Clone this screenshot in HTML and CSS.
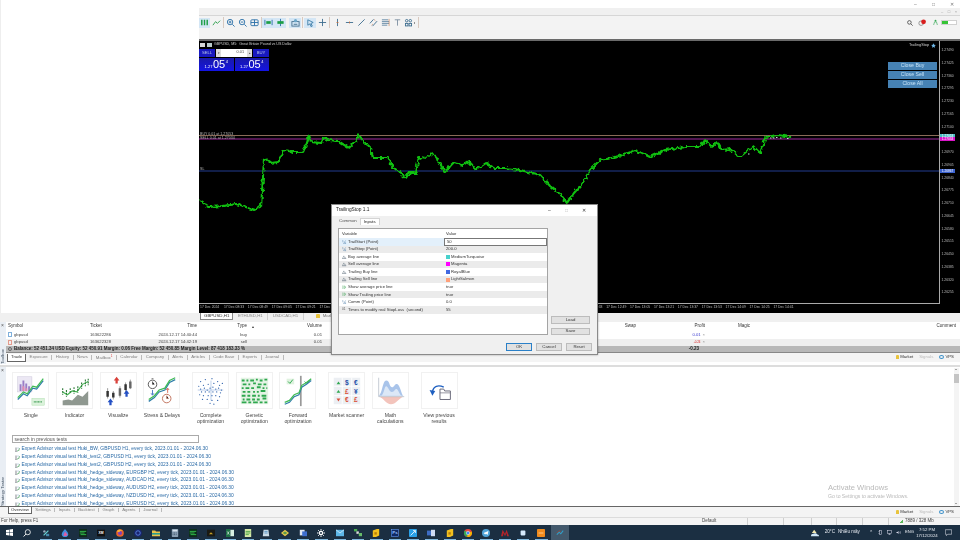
FILE: index.html
```html
<!DOCTYPE html>
<html lang="en">
<head>
<meta charset="utf-8">
<title>MetaTrader 5</title>
<link rel="stylesheet" href="styles.css">
</head>
<body>
<svg class="defs" width="0" height="0">
  <symbol id="tic" viewBox="0 0 10 10"><path d="M2 1v8M1 8l1 1 1-1" fill="none" stroke="#333a44" stroke-width="1.200"/><path d="M5 9l1-3 2 1 1-5" fill="none" stroke="#3f9a55" stroke-width="1.200"/><path d="M5 2l2 0" stroke="#2a6aa6"/></symbol>
  <symbol id="ihalf" viewBox="0 0 10 10"><path d="M2 1v4M1 1.500l1-.5M3 9l5-8" fill="none" stroke="#4a7ca8"/><path d="M6 6h2.500v1.500H6V9h3" fill="none" stroke="#4a7ca8" stroke-width=".8"/></symbol>
  <symbol id="iline" viewBox="0 0 10 10"><path d="M1 8l3-6 2 4 1-1 2 3z" fill="none" stroke="#5f6f7e"/><path d="M0 9h10" stroke="#5f6f7e"/></symbol>
  <symbol id="ibool" viewBox="0 0 10 10"><path d="M2 1v8M5 2l4 3-4 3z" fill="none" stroke="#3aa050"/></symbol>
</svg>
<div class="app">
  <div class="upper">
    <div class="blank"></div>
    <div class="work">
      <div class="titlebar">
        <span class="wc">&#8211;</span><span class="wc">&#9633;</span><span class="wc">&#10005;</span>
      </div>
      <div class="menubar"><span class="mc">&#8211;</span><span class="mc">&#9633;</span><span class="mc">&#215;</span></div>
      <div class="toolbar">
        <span class="tb first hl"><svg viewBox="0 0 10 10"><path d="M2 2v6M5 2v6M8 2v6" stroke="#1b9e45" stroke-width="1.600"/></svg></span>
        <span class="tb"><svg viewBox="0 0 10 10"><path d="M1 8l3-4 2 2 3-3" fill="none" stroke="#2c9e4b"/></svg></span>
        <span class="sep"></span>
        <span class="tb"><svg viewBox="0 0 10 10"><circle cx="4.500" cy="4.500" r="3" fill="none" stroke="#2a6fa8"/><path d="M7 7l2.500 2.500M3 4.500h3M4.500 3v3" stroke="#2a6fa8"/></svg></span>
        <span class="tb"><svg viewBox="0 0 10 10"><circle cx="4.500" cy="4.500" r="3" fill="none" stroke="#2a6fa8"/><path d="M7 7l2.500 2.500M3 4.500h3" stroke="#2a6fa8"/></svg></span>
        <span class="tb"><svg viewBox="0 0 10 10"><rect x="1" y="2" width="8" height="6.500" rx="1" fill="none" stroke="#2a6fa8"/><path d="M1 5h8M5 2v6.500" stroke="#2a6fa8"/></svg></span>
        <span class="sep"></span>
        <span class="tb hl"><svg viewBox="0 0 10 10"><path d="M1 2v6M9 2v6" stroke="#2a6fa8"/><path d="M2.500 5h5" stroke="#1b9e45" stroke-width="3"/></svg></span>
        <span class="tb hl"><svg viewBox="0 0 10 10"><path d="M5 1v8" stroke="#2a6fa8"/><path d="M1.500 5h7" stroke="#1b9e45" stroke-width="3"/></svg></span>
        <span class="gap"></span>
        <span class="tb hl"><svg viewBox="0 0 10 10"><rect x="1" y="4" width="8" height="5" fill="none" stroke="#45708f"/><circle cx="5" cy="3" r="1.800" fill="#6fa8c9"/><path d="M3 7h4" stroke="#45708f"/></svg></span>
        <span class="sep wide"></span>
        <span class="tb hl"><svg viewBox="0 0 10 10"><path d="M2 2l6 3-2.500 1L7 9 5.500 9.500 4.500 6.500 2 8z" fill="none" stroke="#3d7ea8"/></svg></span>
        <span class="tb"><svg viewBox="0 0 10 10"><path d="M5 1v8M1 5h8" stroke="#3d6d8f"/></svg></span>
        <span class="sep wide"></span>
        <span class="tb"><svg viewBox="0 0 10 10"><path d="M5 1v8" stroke="#3d6d8f"/><path d="M4 5h2" stroke="#c06a3a"/></svg></span>
        <span class="tb"><svg viewBox="0 0 10 10"><path d="M1 5h8" stroke="#3d6d8f"/><path d="M5 4v2" stroke="#c06a3a"/></svg></span>
        <span class="tb"><svg viewBox="0 0 10 10"><path d="M1.500 8.500l7-7" stroke="#3d6d8f"/></svg></span>
        <span class="tb"><svg viewBox="0 0 10 10"><path d="M1 6l4-4.500M4 9l5-5.500" stroke="#3d6d8f"/><path d="M3 8l1-1M6 2l1 1" stroke="#c06a3a"/></svg></span>
        <span class="tb"><svg viewBox="0 0 10 10"><path d="M1 2h7M1 4h8M1 6h8M1 8h6" stroke="#3d6d8f" stroke-width=".8"/><path d="M9 1v8" stroke="#c06a3a" stroke-width=".6"/></svg></span>
        <span class="tb"><svg viewBox="0 0 10 10"><path d="M2 2h6M5 2v6.500" stroke="#7c8fa0"/></svg></span>
        <span class="tb short"><svg viewBox="0 0 10 10"><circle cx="3" cy="3" r="1.400" fill="none" stroke="#3d6d8f"/><circle cx="7" cy="3" r="1.400" fill="none" stroke="#3d6d8f"/><rect x="1.600" y="6" width="2.800" height="2.800" fill="none" stroke="#3d6d8f"/><rect x="5.600" y="6" width="2.800" height="2.800" fill="none" stroke="#3d6d8f"/></svg></span>
        <span class="tbarrow"></span>
        <span class="sep"></span>
        <span class="spacer"></span>
        <span class="rt search"><svg viewBox="0 0 10 10"><circle cx="4" cy="4" r="3" fill="none" stroke="#333" stroke-width="1.200"/><path d="M6.300 6.300L9.500 9.500" stroke="#333" stroke-width="1.200"/></svg></span>
        <span class="rt bell"><svg viewBox="0 0 12 10"><circle cx="4" cy="6" r="3.200" fill="none" stroke="#777"/><circle cx="7.500" cy="4" r="3.400" fill="#d81e1e"/></svg></span>
        <span class="rt person"><svg viewBox="0 0 8 10"><circle cx="4" cy="2" r="1.500" fill="#34a853"/><path d="M1 9l1.500-5h3L7 9" fill="none" stroke="#34a853"/></svg></span>
        <span class="conn"><span class="conn-fill"></span></span>
      </div>
      <div class="chart">
        <div class="chart-main">
          <div class="plot">
            <svg class="plot-svg" viewBox="199 41 740 263" preserveAspectRatio="none">
              <defs>
                <filter id="jitter" filterUnits="userSpaceOnUse" x="199" y="41" width="740" height="263" color-interpolation-filters="sRGB">
                  <feTurbulence type="fractalNoise" baseFrequency="0.3" numOctaves="1" seed="4"/>
                  <feDisplacementMap in="SourceGraphic" scale="6" xChannelSelector="R" yChannelSelector="G"/>
                </filter>
              </defs>
              <line class="ln-buy" x1="199" y1="135.500" x2="939" y2="135.500"/>
              <line class="ln-sell" x1="199" y1="139" x2="939" y2="139"/>
              <line class="ln-sl" x1="199" y1="171" x2="939" y2="171"/>
              <polyline class="price" filter="url(#jitter)" points="199,200 209,207 223,206 236,204 246,207 254,210 261,207 263,177 264,158 271,163 278,162 284,150 293,152 303,152 307,143 309,135 311,142 321,143 324,137 329,140 338,141 349,148 356,140 359,135 364,142 371,148 373,158 388,158 393,167 406,178 409,173 416,173 419,157 426,158 433,153 439,162 445,172 453,163 463,165 469,161 476,170 486,163 494,168 505,168 520,170 540,175 550,186 560,194 567,203 574,193 582,184 590,170 600,160 612,158 622,155 635,150 650,157 665,150 685,147 700,147 705,140 712,147 717,142 722,150 730,149 740,157 753,146 760,153 766,137 778,135 790,137"/>
              <path class="ticks" d="M748 154h1.500M770 138h1.500M773 138h1.500M776 137.500h1.500M780 138h1.500M787 138.500h1.500"/>
              <text class="mini" x="200" y="134.500">BUY 0.01 at 1.27053</text>
              <text class="mini" x="200" y="138.500">SELL 0.01 at 1.27034</text>
              <text class="mini" x="200" y="170">SL</text>
            </svg>
            <div class="chart-title">
              <span class="ct-icon"></span><span class="ct-icon dark"></span>
              <span>GBPUSD, M5:  Great Britain Pound vs US Dollar</span>
            </div>
            <div class="trade-panel">
              <div class="tp-top">
                <span class="tp-btn">SELL</span>
                <span class="tp-spin"><b>&#9662;</b><i>0.01</i><b>&#9652;</b></span>
                <span class="tp-btn">BUY</span>
              </div>
              <div class="tp-quotes">
                <div class="quote"><small>1.27</small><strong>05</strong><sup>4</sup></div>
                <div class="quote"><small>1.27</small><strong>05</strong><sup>4</sup></div>
              </div>
            </div>
            <div class="ea-name">TrailingStop <svg viewBox="0 0 10 10"><path d="M5 .5l1.400 3 3.300.4-2.400 2.200.6 3.300L5 7.800 2.100 9.400l.6-3.300L.3 3.900l3.300-.4z" fill="#6fb6e6"/></svg></div>
            <div class="close-btns">
              <span class="close-btn">Close Buy</span>
              <span class="close-btn">Close Sell</span>
              <span class="close-btn">Close All</span>
            </div>
          </div>
          <div class="axis">
            <span>1.27490</span><span>1.27425</span><span>1.27360</span><span>1.27295</span><span>1.27230</span><span>1.27165</span><span>1.27100</span><span></span><span>1.26970</span><span>1.26905</span><span>1.26840</span><span>1.26775</span><span>1.26710</span><span>1.26645</span><span>1.26580</span><span>1.26515</span><span>1.26450</span><span>1.26385</span><span>1.26320</span><span>1.26255</span>
            <em class="tag tag-buy">1.27053</em>
            <em class="tag tag-sell">1.27034</em>
            <em class="tag tag-sl">1.26867</em>
          </div>
        </div>
        <div class="times">
          <span>17 Dec 2024</span><span>17 Dec 08:33</span><span>17 Dec 08:49</span><span>17 Dec 09:05</span><span>17 Dec 09:21</span><span>17 Dec 09:37</span><span></span><span></span><span></span><span></span><span></span><span></span><span></span><span></span><span></span><span></span><span>17 Dec 12:33</span><span>17 Dec 12:49</span><span>17 Dec 13:05</span><span>17 Dec 13:21</span><span>17 Dec 13:37</span><span>17 Dec 13:53</span><span>17 Dec 14:09</span><span>17 Dec 14:25</span><span>17 Dec 14:41</span>
        </div>
      </div>
    </div>
  </div>

  <div class="charttabs">
    <span class="ctab active">GBPUSD,H1</span><span class="ctab">ETHUSD,H1</span><span class="ctab">USDCAD,H1</span>
    <span class="ctab market"><i class="lock"></i>Market</span>
  </div>

  <div class="toolbox">
    <div class="side"><span class="side-x">&#215;</span><span class="side-label">Toolbox</span></div>
    <div class="box-main">
      <div class="row head">
        <span>Symbol</span><span>Ticket</span><span class="r">Time</span><span class="r">Type</span><span class="arrow">&#9652;</span><span class="r">Volume</span><span class="r">Swap</span><span class="r">Profit</span><span class="r">Magic</span><span class="r">Comment</span>
      </div>
      <div class="row">
        <span class="sym"><i class="pos buy"></i>gbpusd</span><span>163622286</span><span class="r">2024.12.17 14:40:44</span><span class="r">buy</span><span></span><span class="r">0.01</span><span></span><span class="r"><b class="pl blue">0.01</b><b class="x">&#215;</b></span><span></span><span></span>
      </div>
      <div class="row alt">
        <span class="sym"><i class="pos sell"></i>gbpusd</span><span>163622328</span><span class="r">2024.12.17 14:42:19</span><span class="r">sell</span><span></span><span class="r">0.01</span><span></span><span class="r"><b class="pl red">-0.24</b><b class="x">&#215;</b></span><span></span><span></span>
      </div>
      <div class="row balance">
        <span class="bal"><i class="bal-ic"></i>Balance: 52 451.34 USD  Equity: 52 450.91  Margin: 0.06  Free Margin: 52 450.85  Margin Level: 87 418 183.33 %</span><span class="r total">-0.23</span>
      </div>
      <div class="tabs tabs-toolbox">
        <span class="tab active">Trade</span><span class="tab">Exposure</span><span class="tab">History</span><span class="tab">News</span><span class="tab">Mailbox<sup class="red">1</sup></span><span class="tab">Calendar</span><span class="tab">Company</span><span class="tab">Alerts</span><span class="tab">Articles</span><span class="tab">Code Base</span><span class="tab">Experts</span><span class="tab">Journal</span>
        <span class="spacer"></span>
        <span class="svc"><i class="lock"></i>Market</span><span class="svc faint">Signals</span><span class="svc"><i class="vps"></i>VPS</span>
      </div>
    </div>
  </div>

  <div class="tester">
    <div class="side"><span class="side-x">&#215;</span><span class="side-label">Strategy Tester</span></div>
    <div class="tester-main">
      <div class="cards">
        <div class="card">
          <div class="thumb"><svg viewBox="0 0 37 37"><rect x="5" y="4" width="15" height="16" fill="#ece8f4" stroke="#c8c4d8" stroke-width=".5"/><path d="M8 19v-7M11 19v-11M14 19v-8M17 19v-5" stroke="#9a7ec6" stroke-width="2"/><path d="M11 19v-5M14 19v-3" stroke="#e08ab0" stroke-width="2"/><path d="M5 28l6-6 4 2 6-8 4 1 7-9" fill="none" stroke="#2f7ea8" stroke-width="1.300"/><path d="M5 26l6-6 4 2 6-8 4 1 7-9" fill="none" stroke="#3fbb55" stroke-width="1.300"/><rect x="20" y="27" width="13" height="7" fill="#dcf2dc" stroke="#a9dca9" stroke-width=".5"/><path d="M22 30.500h9" stroke="#3a9a50" stroke-dasharray="1 .5" stroke-width="1.500"/></svg></div>
          <p class="one">Single</p>
        </div>
        <div class="card">
          <div class="thumb"><svg viewBox="0 0 37 37"><path d="M6 34v-5l6-1 4 1 6-6 5 2 6-6v15z" fill="#8f9890"/><path d="M6 20l5 3 5-4 5 1 6-8 6-3" fill="none" stroke="#45b653" stroke-width="1.200"/><path d="M6 16v7M10 18v7M14 16v6M18 15v7M22 14v7M26 10v7M30 7v7M33 6v7" stroke="#2f7b3a" stroke-width="1.200" stroke-dasharray="2 1"/></svg></div>
          <p class="one">Indicator</p>
        </div>
        <div class="card">
          <div class="thumb"><svg viewBox="0 0 37 37"><path d="M7 16v11M13 19v9M20 14v12M26 10v10M31 7v10" stroke="#555" stroke-width=".6"/><path d="M7 19v6M13 21v5M26 12v6" stroke="#333" stroke-width="2.600"/><path d="M20 16v8M31 9v7" stroke="#666" stroke-width="2.600"/><path d="M16.500 4l3 4h-1.800v3h-2.400V8h-1.800z" fill="#d9403a"/><path d="M10 27l3 4h-1.800v3H8.800v-3H7z" fill="#2450c4"/><path d="M27 18l3 4h-1.800v3h-2.400v-3H24z" fill="#2450c4"/></svg></div>
          <p class="one">Visualize</p>
        </div>
        <div class="card">
          <div class="thumb"><svg viewBox="0 0 37 37"><circle cx="9" cy="12" r="4.500" fill="#fff" stroke="#555"/><path d="M9 9v3h2M8 6h2" stroke="#555" stroke-width=".8"/><circle cx="24" cy="27" r="4.500" fill="#fff" stroke="#c0705a"/><path d="M24 24v3h2" stroke="#c0705a" stroke-width=".8"/><path d="M5 30l6-4 5-6 6-2 5-8 6-3" fill="none" stroke="#2f7ea8" stroke-width="1.300"/><path d="M5 28l6-4 5-6 6-2 5-8 6-3" fill="none" stroke="#3fbb55" stroke-width="1.300"/><path d="M9 18v5M7.500 21.500l1.500 2 1.500-2" fill="none" stroke="#4a78c8"/><path d="M25 21v-5M23.500 18l1.500-2 1.500 2" fill="none" stroke="#d86b5a"/></svg></div>
          <p class="one">Stress &amp; Delays</p>
        </div>
        <div class="card wide">
          <div class="thumb"><svg viewBox="0 0 37 37"><path d="M5 18h27M19 8v21" stroke="#9db8e0" stroke-width=".7"/><path d="M8 9h.1M13 7h.1M20 6h.1M26 9h.1M31 11h.1M6 14h.1M11 13h.1M16 12h.1M22 11h.1M28 13h.1M8 17h.1M12 16h.1M15 18h.1M18 16h.1M21 15h.1M24 17h.1M27 16h.1M30 18h.1M9 20h.1M13 20h.1M17 20h.1M21 20h.1M25 20h.1M29 21h.1M7 23h.1M11 24h.1M16 24h.1M20 24h.1M24 24h.1M28 25h.1M10 28h.1M15 28h.1M20 29h.1M26 29h.1M18 32h.1M22 33h.1" stroke="#3a6ab0" stroke-width="1.300" stroke-linecap="round"/></svg></div>
          <p>Complete optimization</p>
        </div>
        <div class="card">
          <div class="thumb"><svg viewBox="0 0 37 37"><rect x="4" y="5" width="29" height="28" fill="#e5f3e5"/><path d="M5 8h3M10 8h2M14 8h4M20 7h2M24 8h3M29 7h3M6 12h4M12 12h2M17 11h3M22 12h4M28 12h3M5 16h2M9 16h4M15 16h3M21 15h4M27 16h2M31 16h1M6 20h3M11 20h3M17 20h2M21 20h2M25 19h5M5 24h4M11 24h3M16 24h4M22 24h2M26 24h5M6 28h2M10 28h4M16 28h3M21 28h3M27 27h4M5 31h5M12 31h3M17 31h5M24 31h3M29 31h3" stroke="#2fa84f" stroke-width="2"/></svg></div>
          <p>Genetic optimization</p>
        </div>
        <div class="card">
          <div class="thumb"><svg viewBox="0 0 37 37"><path d="M22 3v32" stroke="#999" stroke-width="1.800"/><rect x="7" y="6" width="8" height="6" fill="#dff2df"/><path d="M8.500 9l2 2 3-4M26 9l2 2 4-4" fill="none" stroke="#2fa84f"/><path d="M5 33l5-2 5-6 5-2 3-8 5-3 5-4" fill="none" stroke="#2f7ea8" stroke-width="1.300"/><path d="M5 31l5-2 5-6 5-2 3-8 5-3 5-4" fill="none" stroke="#3fbb55" stroke-width="1.300"/></svg></div>
          <p>Forward optimization</p>
        </div>
        <div class="card wide">
          <div class="thumb"><svg viewBox="0 0 37 37"><rect x="5" y="5" width="28" height="28" fill="#eceff3"/><path d="M14 5v28M24 5v28M5 14h28M5 24h28" stroke="#fff"/><path d="M8 12l2-3 2 3z" fill="#2fa84f"/><path d="M8 21l2-3 2 3z" fill="#2fa84f"/><path d="M8 27l2 3 2-3z" fill="#d9503a"/><text class="sym-b" x="19" y="12.500">$</text><text class="sym-b" x="28.500" y="12.500">&#8364;</text><text class="sym-r" x="19" y="22">&#163;</text><text class="sym-b" x="28.500" y="22">&#165;</text><text class="sym-r" x="19" y="31">&#8364;</text><text class="sym-r" x="28.500" y="31">&#163;</text></svg></div>
          <p class="one">Market scanner</p>
        </div>
        <div class="card">
          <div class="thumb"><svg viewBox="0 0 37 37"><path d="M6 24C10 22 10 8 14 8s3 7 6 7 3-5 6-3 4 11 6 12z" fill="#a9c4ea"/><path d="M9 24c3-3 3-10 5-10s3 6 6 6 3-4 5-3 3 6 5 7z" fill="#dce8f7"/><path d="M6 25c5 1 8 8 13 8s8-6 13-8z" fill="#f3c4bc"/><path d="M6 5v20h27" fill="none" stroke="#9aa6b5" stroke-width=".6"/></svg></div>
          <p>Math calculations</p>
        </div>
        <div class="card wide">
          <div class="thumb"><svg viewBox="0 0 37 37"><path d="M11 20c1-6 6-8 12-5" fill="none" stroke="#1e5fc0" stroke-width="1.500"/><path d="M8 18l3 6 3-5z" fill="#1e5fc0"/><path d="M19 17h4l1 2h6v9H19z" fill="#fff" stroke="#667" stroke-width="1"/><path d="M19 21h11" stroke="#667" stroke-width=".7"/></svg></div>
          <p>View previous results</p>
        </div>
      </div>
      <div class="search-box">search in previous tests</div>
      <ul class="tests">
        <li><svg class="t-ic"><use href="#tic"/></svg>Expert Advisor visual test Huki_BW, GBPUSD H1, every tick, 2023.01.01 - 2024.06.30</li>
        <li><svg class="t-ic"><use href="#tic"/></svg>Expert Advisor visual test Huki_test2, GBPUSD H1, every tick, 2023.01.01 - 2024.06.30</li>
        <li><svg class="t-ic"><use href="#tic"/></svg>Expert Advisor visual test Huki_test2, GBPUSD H2, every tick, 2023.01.01 - 2024.06.30</li>
        <li><svg class="t-ic"><use href="#tic"/></svg>Expert Advisor visual test Huki_hedge_sideway, EURGBP H2, every tick, 2023.01.01 - 2024.06.30</li>
        <li><svg class="t-ic"><use href="#tic"/></svg>Expert Advisor visual test Huki_hedge_sideway, AUDCAD H2, every tick, 2023.01.01 - 2024.06.30</li>
        <li><svg class="t-ic"><use href="#tic"/></svg>Expert Advisor visual test Huki_hedge_sideway, AUDUSD H2, every tick, 2023.01.01 - 2024.06.30</li>
        <li><svg class="t-ic"><use href="#tic"/></svg>Expert Advisor visual test Huki_hedge_sideway, NZDUSD H2, every tick, 2023.01.01 - 2024.06.30</li>
        <li><svg class="t-ic"><use href="#tic"/></svg>Expert Advisor visual test Huki_hedge_sideway, EURUSD H2, every tick, 2023.01.01 - 2024.06.30</li>
      </ul>
      <div class="scrollbar"><span class="sb-up"></span><span class="sb-thumb"></span><span class="sb-down"></span></div>
      <div class="watermark"><strong>Activate Windows</strong><span>Go to Settings to activate Windows.</span></div>
    </div>
  </div>

  <div class="tabs tabs-tester">
    <span class="tab active">Overview</span><span class="tab">Settings</span><span class="tab">Inputs</span><span class="tab">Backtest</span><span class="tab">Graph</span><span class="tab">Agents</span><span class="tab">Journal</span>
    <span class="spacer"></span>
    <span class="svc"><i class="lock"></i>Market</span><span class="svc faint">Signals</span><span class="svc"><i class="vps"></i>VPS</span>
  </div>

  <div class="status">
    <span class="st-help">For Help, press F1</span>
    <span class="st-cell st-default">Default</span>
    <span class="st-cell c36"></span><span class="st-cell c28"></span><span class="st-cell c25"></span><span class="st-cell c26"></span><span class="st-cell c26"></span>
    <span class="st-cell st-mem"><i class="bars"></i>7889 / 328 Mb</span>
  </div>

  <div class="taskbar">
    <span class="start"><svg viewBox="0 0 10 10"><path d="M0 1.500l4.300-.6v3.800H0zM5 .8L10 0v4.700H5zM0 5.400h4.300v3.800L0 8.600zM5 5.400h5V10l-5-.7z" fill="#fff"/></svg></span>
    <span class="t-search"><svg viewBox="0 0 10 10"><circle cx="6" cy="4" r="3.200" fill="none" stroke="#fff"/><path d="M3.600 6.400L.8 9.400" stroke="#fff" stroke-width="1.200"/></svg></span>
    <div class="apps">
      <span class="app-i on"><svg viewBox="0 0 10 10"><path d="M2 8l3-3 3-3" stroke="#6cc" stroke-width="1.500"/><circle cx="3" cy="3" r="1.500" fill="#9ab"/><rect x="5" y="6" width="4" height="3" fill="#48a"/></svg></span>
      <span class="app-i on"><svg viewBox="0 0 10 10"><path d="M5 0c3 3 4 5 4 6.500a4 3.500 0 0 1-8 0C1 5 2 3 5 0z" fill="#3f8fe0"/><path d="M5 3c1 2 3 3 3 4a3 2.500 0 0 1-5 1z" fill="#e05aa0"/></svg></span>
      <span class="app-i on"><svg viewBox="0 0 10 10"><rect width="10" height="10" fill="#0e2a1a"/><path d="M1 3h8M1 5h6M2 7h7" stroke="#39d353"/></svg></span>
      <span class="app-i on"><svg viewBox="0 0 12 10"><rect width="12" height="10" fill="#111"/><text class="xm" x="6" y="6.800">XM</text></svg></span>
      <span class="app-i on"><svg viewBox="0 0 10 10"><circle cx="5" cy="5" r="4.800" fill="#e8622a"/><circle cx="5" cy="5" r="2.500" fill="#7a3fc0"/><path d="M1 3c2-3 5-3 7-1-2 0-3 1-4 2" fill="#f9b233"/></svg></span>
      <span class="app-i on"><svg viewBox="0 0 10 10"><circle cx="5" cy="5" r="4.800" fill="#1a2470"/><circle cx="5" cy="5" r="2.800" fill="none" stroke="#5c8fe8"/></svg></span>
      <span class="app-i on"><svg viewBox="0 0 10 10"><path d="M0 2h4l1 1h5v6H0z" fill="#eac34a"/><rect y="5" width="10" height="2" fill="#2a9d8f"/></svg></span>
      <span class="app-i on"><svg viewBox="0 0 8 10"><rect width="8" height="10" rx=".8" fill="#8aa0b4"/><rect x="1" y="1" width="6" height="2" fill="#d9e4ee"/><path d="M1 5h6M1 7h6" stroke="#34495e" stroke-dasharray="1 1"/></svg></span>
      <span class="app-i on"><svg viewBox="0 0 10 10"><rect width="10" height="10" fill="#0c2f1a"/><path d="M1 3h8M1 5h6M2 7h7" stroke="#39d353"/></svg></span>
      <span class="app-i on"><svg viewBox="0 0 12 10"><rect width="12" height="10" fill="#1a1a14"/><path d="M3 7l3-3 3 3z" fill="#c9a227"/></svg></span>
      <span class="app-i on"><svg viewBox="0 0 10 10"><rect width="5.500" height="10" fill="#1e7145"/><rect x="5.500" y="1" width="4.500" height="8" fill="#d9efe2"/><path d="M1.500 3l2.500 4M4 3L1.500 7" stroke="#fff" stroke-width=".7"/></svg></span>
      <span class="app-i on"><svg viewBox="0 0 8 10"><rect width="8" height="10" fill="#d5e8a8"/><path d="M1 3h6M1 5h6M1 7h4" stroke="#3a9a3a"/></svg></span>
      <span class="app-i on"><svg viewBox="0 0 10 10"><path d="M2 1h6l1 8H1z" fill="#c9dce8"/><path d="M3 3h4M3 5h4" stroke="#4a8cc0"/></svg></span>
      <span class="app-i on"><svg viewBox="0 0 10 10"><path d="M5 1l5 4-5 4-5-4z" fill="#e8c94a"/><path d="M5 3l3 2-3 2-3-2z" fill="#5a9a4a"/></svg></span>
      <span class="app-i on"><svg viewBox="0 0 10 10"><rect x="1" y="1" width="6" height="7" fill="#dfe7f2"/><rect x="4" y="3" width="6" height="6" fill="#3e6fd0"/></svg></span>
      <span class="app-i on"><svg viewBox="0 0 10 10"><circle cx="5" cy="5" r="2" fill="none" stroke="#fff" stroke-width="1.500"/><path d="M5 0v2M5 8v2M0 5h2M8 5h2M1.500 1.500l1.500 1.500M7 7l1.500 1.500M1.500 8.500L3 7M7 3l1.500-1.500" stroke="#fff" stroke-width="1.200"/></svg></span>
      <span class="app-i on"><svg viewBox="0 0 10 8"><rect width="10" height="8" fill="#5db7e8"/><path d="M0 0l5 4 5-4" fill="none" stroke="#d7eefb"/></svg></span>
      <span class="app-i on"><svg viewBox="0 0 10 10"><rect x="0" y="0" width="4" height="3" fill="#4caf50"/><rect x="3" y="3" width="3" height="3" fill="#ddd"/><rect x="6" y="5" width="4" height="4" fill="#66bb6a"/></svg></span>
      <span class="app-i on"><svg viewBox="0 0 8 10"><path d="M0 2l5-2h3v8l-4 2H0z" fill="#f2c01e"/><path d="M2 4h3v3H2z" fill="#b77f0a"/></svg></span>
      <span class="app-i on"><svg viewBox="0 0 10 10"><rect width="10" height="10" fill="#0f2a66"/><rect x=".5" y=".5" width="9" height="9" fill="none" stroke="#7ab0ff" stroke-width=".6"/><text class="ps" x="5" y="6.800">Ps</text></svg></span>
      <span class="app-i on"><svg viewBox="0 0 10 10"><rect width="10" height="10" rx="1" fill="#2aa0e6"/><path d="M2 8l6-6M5 2h3v3" stroke="#fff" fill="none"/></svg></span>
      <span class="app-i on"><svg viewBox="0 0 10 10"><rect x="0" y="2" width="5" height="6" fill="#3d6cc4"/><rect x="5" y="1" width="5" height="8" fill="#cfdcf4"/></svg></span>
      <span class="app-i on"><svg viewBox="0 0 8 10"><path d="M0 2l5-2h3v8l-4 2H0z" fill="#f2c01e"/><path d="M2 4h3v3H2z" fill="#b77f0a"/></svg></span>
      <span class="app-i on"><svg viewBox="0 0 10 10"><circle cx="5" cy="5" r="5" fill="#e8453c"/><path d="M5 5L1 2a5 5 0 0 0 3 8z" fill="#34a853"/><path d="M5 5l-1 5a5 5 0 0 0 5.500-7z" fill="#f4b400"/><circle cx="5" cy="5" r="2.200" fill="#4285f4" stroke="#fff" stroke-width=".6"/></svg></span>
      <span class="app-i on"><svg viewBox="0 0 10 10"><circle cx="5" cy="5" r="5" fill="#4fa3d8"/><path d="M2 5l6-2.500-1 5-2-1.500-1 1z" fill="#fff"/></svg></span>
      <span class="app-i on"><svg viewBox="0 0 10 10"><path d="M0 9l2-8 3 5 2-5 3 8H7.500L7 5 5 9 3 5 2.500 9z" fill="#b3232a"/></svg></span>
      <span class="app-i on"><svg viewBox="0 0 10 10"><rect x="2" y="2" width="6" height="6" rx="1" fill="#d6e9fb"/></svg></span>
      <span class="app-i on"><svg viewBox="0 0 10 10"><rect width="10" height="10" rx="1" fill="#f08a1c"/><path d="M2 5h6" stroke="#ffd9a8"/></svg></span>
      <span class="app-i current"><svg viewBox="0 0 10 10"><path d="M1 7l3-3 2 2 3-4" fill="none" stroke="#2f9ec9" stroke-width="1.300"/><path d="M1 5l3-3 2 2" fill="none" stroke="#9a4a3a"/></svg></span>
    </div>
    <span class="spacer"></span>
    <div class="tray">
      <span class="weather"><svg viewBox="0 0 12 10"><path d="M5 1l3 4H2z" fill="#f4e9b0"/><path d="M1 9c0-2 1-3 3-3 1-1 4-1 5 1 2 0 2 2 2 2z" fill="#cfe6f7"/></svg></span>
      <span class="tr-text">20&#176;C</span><span class="tr-text">Nhi&#7873;u m&#226;y</span>
      <span class="tr-icon">&#8963;</span>
      <span class="tr-box"><svg viewBox="0 0 8 10"><rect x="2" y="1" width="4" height="8" fill="none" stroke="#dde"/><path d="M0 3h2M0 7h2" stroke="#dde"/></svg></span>
      <span class="tr-box"><svg viewBox="0 0 10 10"><rect x="1" y="1" width="8" height="6" fill="none" stroke="#dde"/><path d="M3 9h4M5 7v2" stroke="#dde"/></svg></span>
      <span class="tr-box"><svg viewBox="0 0 10 10"><path d="M1 4v2h2l2 2V2L3 4z" fill="#dde"/><path d="M6.500 3.500c1 1 1 2 0 3M8 2c1.500 2 1.500 4 0 6" fill="none" stroke="#dde" stroke-width=".8"/></svg></span>
      <span class="tr-lang">ENG</span>
      <span class="clock">7:52 PM<br>17/12/2024</span>
      <span class="notif"><svg viewBox="0 0 10 10"><path d="M.5 1h9v6.500H4L2 9.500v-2H.5z" fill="none" stroke="#e6eaf0" stroke-width=".8"/></svg></span>
    </div>
  </div>

  <div class="dialog">
    <div class="dlg-title"><span>TrailingStop 1.1</span><span class="spacer"></span><span class="dw">&#8211;</span><span class="dw dim">&#9633;</span><span class="dw">&#10005;</span></div>
    <div class="dlg-tabs"><span class="dtab">Common</span><span class="dtab on">Inputs</span></div>
    <div class="dlg-body">
      <div class="dlg-table">
        <div class="dr dhead"><span class="dn">Variable</span><span class="dv">Value</span></div>
        <div class="dr sel"><span class="dn"><svg class="vi"><use href="#ihalf"/></svg>TrailStart (Point)</span><span class="dv edit">50</span></div>
        <div class="dr"><span class="dn"><svg class="vi"><use href="#ihalf"/></svg>TrailStep (Point)</span><span class="dv">200.0</span></div>
        <div class="dr"><span class="dn"><svg class="vi"><use href="#iline"/></svg>Buy average line</span><span class="dv"><i class="sw s1"></i>MediumTurquoise</span></div>
        <div class="dr"><span class="dn"><svg class="vi"><use href="#iline"/></svg>Sell average line</span><span class="dv"><i class="sw s2"></i>Magenta</span></div>
        <div class="dr"><span class="dn"><svg class="vi"><use href="#iline"/></svg>Trailing Buy line</span><span class="dv"><i class="sw s3"></i>RoyalBlue</span></div>
        <div class="dr"><span class="dn"><svg class="vi"><use href="#iline"/></svg>Trailing Sell line</span><span class="dv"><i class="sw s4"></i>LightSalmon</span></div>
        <div class="dr"><span class="dn"><svg class="vi"><use href="#ibool"/></svg>Show average price line</span><span class="dv">true</span></div>
        <div class="dr"><span class="dn"><svg class="vi"><use href="#ibool"/></svg>Show Trailing price line</span><span class="dv">true</span></div>
        <div class="dr"><span class="dn"><svg class="vi"><use href="#ihalf"/></svg>Comm (Point)</span><span class="dv">0.0</span></div>
        <div class="dr"><span class="dn"><i class="vnum">01</i>Times to modify real StopLoss  (second)</span><span class="dv">55</span></div>
      </div>
      <div class="dlg-side">
        <span class="btn">Load</span>
        <span class="btn">Save</span>
      </div>
    </div>
    <div class="dlg-foot">
      <span class="btn wd def">OK</span><span class="btn wd">Cancel</span><span class="btn wd">Reset</span>
    </div>
  </div>
</div>
</body>
</html>
```

FILE: styles.css
```css
* { box-sizing: border-box; }
html, body { margin: 0; padding: 0; }
body { width: 960px; height: 540px; overflow: hidden; background: #fff; }
svg { display: block; }
i, em { font-style: normal; }
.defs { position: absolute; }
.spacer { flex: 1; }

.app {
  position: relative;
  width: 960px;
  height: 540px;
  display: flex;
  flex-direction: column;
  font-family: "Liberation Sans", Arial, sans-serif;
  font-size: 4.6px;
  color: #333;
  line-height: 1;
  overflow: hidden;
  filter: blur(.35px);
}

/* upper */
.upper { display: flex; height: 313px; }
.blank { width: 199px; background: #fff; border-left: 1px solid #eee; }
.work { flex: 1; display: flex; flex-direction: column; min-width: 0; }
.titlebar { height: 8px; background: #fff; display: flex; justify-content: flex-end; align-items: center; padding-right: 5px; gap: 11px; }
.wc { font-size: 5px; color: #777; width: 7px; text-align: center; }
.menubar { height: 8px; background: #f0f0f0; border-bottom: 1px solid #d6d6d6; display: flex; justify-content: flex-end; align-items: center; padding-right: 2px; gap: 3px; }
.mc { font-size: 4px; color: #999; width: 4px; text-align: center; }

.toolbar { height: 25px; background: #f3f3f3; border-bottom: 2px solid #6a6a6a; display: flex; align-items: center; padding-bottom: 10px; }
.tb { width: 12px; height: 10px; display: flex; align-items: center; justify-content: center; }
.tb svg { width: 9px; height: 9px; }
.tb.first { width: 11px; }
.tb.short { width: 10px; }
.tb.hl { background: #d4e6f5; }
.sep { width: 1px; height: 11px; background: #d8c9bf; margin: 0 .5px; }
.sep.wide { margin: 0 1px; }
.gap { width: 3px; }
.tbarrow { width: 0; height: 0; margin: 0 1px; border: 1.300px solid transparent; border-left-color: #333; }
.rt { display: flex; }
.rt.search svg { width: 6px; height: 6px; }
.rt.bell svg { width: 9px; height: 7px; }
.rt.person svg { width: 5px; height: 7px; }
.search { margin-right: 4.500px; }
.bell { margin-right: 6px; }
.person { margin-right: 3.500px; }
.conn { width: 16px; height: 5px; background: #fff; border: 1px solid #d0d0d0; margin-right: 3px; }
.conn-fill { display: block; width: 6px; height: 100%; background: #35c435; }

/* chart */
.chart { flex: 1; display: flex; flex-direction: column; background: #000; min-height: 0; }
.chart-main { flex: 1; display: flex; min-height: 0; }
.plot { position: relative; width: 741px; border-right: 1px solid #aaa; border-bottom: 1px solid #aaa; }
.plot-svg { width: 740px; height: 263px; }
.price { fill: none; stroke: #10c010; stroke-width: 2.100; stroke-linejoin: bevel; }
.ticks { stroke: #c8d8e0; stroke-width: 1; fill: none; }
.ln-buy { stroke: #8a6b58; stroke-width: 1; }
.ln-sell { stroke: #a02aa0; stroke-width: 1; }
.ln-sl { stroke: #233d90; stroke-width: 1; }
.mini { font: 3.600px "Liberation Sans", sans-serif; fill: #b9b9b9; }
.chart-title { position: absolute; left: 1px; top: 2px; display: flex; align-items: center; gap: 1.500px; color: #cfcfcf; font-size: 3.600px; white-space: pre; }
.ct-icon { width: 5px; height: 4px; background: #d8d8d8; }
.ct-icon.dark { margin-right: 1px; background: #bcc; }
.trade-panel { position: absolute; left: 0; top: 8px; width: 70px; }
.tp-top { display: flex; height: 8px; gap: 1px; align-items: stretch; }
.tp-btn { width: 16px; background: #1818c0; color: #b8c8e8; font-size: 4.200px; display: flex; align-items: center; justify-content: center; }
.tp-spin { flex: 1; background: #fff; color: #444; display: flex; align-items: center; justify-content: space-between; font-size: 3.800px; }
.tp-spin b { width: 5px; height: 100%; background: #ddd; text-align: center; line-height: 8px; font-weight: normal; font-size: 3px; }
.tp-spin i { flex: 1; text-align: right; padding-right: 3px; }
.tp-quotes { display: flex; gap: 1px; height: 13px; margin-top: 1px; }
.quote { flex: 1; display: flex; align-items: flex-end; justify-content: center; color: #fff; background: linear-gradient(#1a1aa8, #1313e4); padding-bottom: 1px; }
.quote small { font-size: 4px; margin-bottom: 1px; }
.quote strong { font-size: 11px; font-weight: normal; margin: 0 .5px; line-height: 11px; }
.quote sup { font-size: 4px; align-self: flex-start; margin-top: 2px; }
.ea-name { position: absolute; right: 3px; top: 2px; display: flex; align-items: center; gap: 2px; color: #cfcfcf; font-size: 3.800px; }
.ea-name svg { width: 5px; height: 5px; }
.close-btns { position: absolute; left: 689px; top: 21px; width: 49px; display: flex; flex-direction: column; gap: 1.500px; }
.close-btn { height: 7.500px; background: #4682b4; color: #c4e2f7; font-size: 5.200px; display: flex; align-items: center; justify-content: center; }

.axis { position: relative; flex: 1; display: flex; flex-direction: column; justify-content: flex-start; padding-top: 7px; color: #bdbdbd; font-size: 3.400px; }
.axis span { height: 12.750px; flex: none; line-height: 4px; padding-left: 1.500px; white-space: nowrap; }
.tag { position: absolute; left: 0; width: 15px; height: 4px; font-size: 3.200px; line-height: 4px; text-align: center; color: #fff; }
.tag-buy { top: 92.500px; background: #48bdc0; }
.tag-sell { top: 96px; background: #d815c8; }
.tag-sl { top: 128px; background: #3b62cf; }
.times { height: 9px; display: flex; align-items: center; padding-left: 1px; padding-bottom: 1px; color: #bdbdbd; font-size: 3.400px; }
.times span { width: 23.900px; flex: none; white-space: nowrap; }

/* chart tabs */
.charttabs { height: 9px; background: #f0f0f0; display: flex; padding-left: 200px; align-items: flex-start; color: #8a8a8a; font-size: 4.400px; }
.ctab { height: 6.500px; padding: 0 4.500px; display: flex; align-items: center; gap: 2px; border-right: 1px solid #cfcfcf; white-space: nowrap; }
.ctab.active { padding: 0 3px; background: #fff; color: #333; border: 1px solid #888; border-top: 0; }
.ctab.market { border-right: 0; color: #777; margin-left: 8px; }
.lock { display: inline-block; width: 3.500px; height: 4px; background: #e8c33c; border-radius: 1px 1px 0 0; margin-right: 1px; }
.vps { display: inline-block; width: 5px; height: 4px; border-radius: 50%; border: 1px solid #3a8fc8; margin-right: 1px; }

/* toolbox */
.toolbox { height: 42px; display: flex; background: #fff; }
.side { width: 6px; background: #e9eef4; position: relative; flex: none; }
.side-x { position: absolute; left: 1px; top: 1px; font-size: 5px; color: #555; }
.side-label { position: absolute; left: .5px; bottom: 0; writing-mode: vertical-rl; transform: rotate(180deg); font-size: 4.300px; color: #3e4e60; white-space: nowrap; }
.box-main { flex: 1; min-width: 0; display: flex; flex-direction: column; }
.row {
  height: 7.500px;
  flex: none;
  display: grid;
  grid-template-columns: 82px 56px 53px 50px 11px 64px 314px 69px 45px 206px;
  align-items: center;
  color: #444;
  font-size: 4.200px;
}
.row.head { height: 9px; font-size: 4.500px; color: #333; }
.row.alt { background: #efefef; }
.row span { padding-left: 2px; white-space: nowrap; }
.row .r { text-align: right; padding: 0; }
.arrow { font-size: 4px; text-align: center; padding: 0 !important; }
.sym { display: flex; align-items: center; gap: 2px; }
.pos { width: 4px; height: 5px; border: 1px solid #7fb0dc; }
.pos.sell { border-color: #e29a8e; }
.pl { font-weight: normal; }
.pl.blue { color: #3a3ad0; }
.pl.red { color: #d82020; }
.x { font-weight: normal; color: #888; margin-left: 2px; }
.row.balance { height: 7px; background: #b8b8b8; border-bottom: 1px solid #888; color: #222; font-weight: bold; font-size: 4.500px; }
.bal { grid-column: 1 / 8; display: flex; align-items: center; gap: 2px; white-space: pre; padding-left: 2px; }
.bal-ic { width: 4px; height: 4px; border-radius: 50%; border: 1px solid #666; }
.total { padding-right: 6px !important; }

.tabs { display: flex; align-items: center; color: #7f7f7f; font-size: 4.300px; }
.tabs-toolbox { height: 9px; background: #f4f4f4; padding-left: 1px; padding-right: 6px; }
.tab { padding: 0 3.500px; border-right: 1px solid #bbb; white-space: nowrap; }
.tab.active { height: 8px; display: flex; align-items: center; padding: 0 3px; background: #fff; color: #333; border: 1px solid #666; border-top: 0; }
.red { color: #d33; font-size: 3px; }
.svc { display: flex; align-items: center; margin-left: 6px; color: #333; }
.svc.faint { color: #bbb; }

/* tester */
.tester { flex: 1; min-height: 0; display: flex; background: #fff; border-top: 2px solid #ddd; margin-top: 1px; }
.tester-main { flex: 1; min-width: 0; position: relative; display: flex; flex-direction: column; padding-top: 5px; overflow: hidden; }
.cards { display: flex; margin-left: 3px; }
.card { width: 43.700px; flex: none; display: flex; flex-direction: column; align-items: center; font-size: 5.100px; color: #444; text-align: center; }
.card.wide { margin-left: 5px; }
.thumb { width: 37px; height: 37px; background: #fff; border: 1px solid #f1f1f1; flex: none; }
.thumb svg { width: 100%; height: 100%; }
.sym-b, .sym-r { font: bold 7px "Liberation Sans", sans-serif; text-anchor: middle; fill: #1f4fa8; }
.sym-r { fill: #d9503a; }
.card p { margin: 3px 0 0; width: 36px; height: 12px; line-height: 6px; }
.card p.one { width: auto; white-space: nowrap; }
.search-box { width: 187px; height: 8px; margin: 11px 0 0 6px; border: 1px solid #aaa; font-size: 5px; line-height: 6px; padding-left: 1.500px; color: #555; flex: none; }
.tests { list-style: none; margin: 2.500px 0 0 9px; padding: 0; color: #2a6aa6; font-size: 4.900px; }
.tests li { height: 7.850px; display: flex; align-items: center; gap: 1.500px; white-space: nowrap; }
.t-ic { width: 5px; height: 5px; flex: none; }
.scrollbar { position: absolute; right: 1px; top: 1px; bottom: 0; width: 5px; background: #f4f4f4; }
.sb-up, .sb-down { position: absolute; left: 1px; width: 0; height: 0; border: 1.500px solid transparent; }
.sb-up { top: 0; border-bottom-color: #555; }
.sb-down { bottom: 1px; border-top-color: #555; }
.sb-thumb { position: absolute; left: 0; top: 6px; width: 5px; height: 9px; background: #c4c4c4; }
.watermark { position: absolute; left: 822px; top: 117px; display: flex; flex-direction: column; gap: 2.500px; color: #b9b9b9; }
.watermark strong { font-weight: normal; font-size: 7.600px; }
.watermark span { font-size: 5.100px; }

.tabs-tester { height: 10.500px; background: #f4f4f4; border-top: 1px solid #666; padding: 0 6px 3px 8px; flex: none; }
.tabs-tester .tab.active { height: 7px; padding: 0 2px; }
.tabs-tester .tab { padding: 0 3.400px; }
.tabs-tester .svc { position: relative; top: 1.500px; }

.status { height: 8.500px; background: #f4f4f4; border-top: 1px solid #dcdcdc; display: flex; align-items: center; color: #444; font-size: 4.500px; flex: none; }
.st-help { width: 700px; padding-left: 1px; }
.st-cell { height: 100%; border-right: 1px solid #cfcfcf; display: flex; align-items: center; }
.st-default { width: 48px; padding-left: 2px; }
.c36 { width: 36px; } .c28 { width: 28px; } .c25 { width: 25px; } .c26 { width: 26px; }
.st-mem { border: 0; padding-left: 10px; gap: 1px; }
.bars { width: 4px; height: 3px; background: linear-gradient(135deg, transparent 50%, #5cb85c 50%); margin-right: 1px; }

/* taskbar */
.taskbar { height: 15px; background: #1b2f42; display: flex; align-items: center; color: #e6eaf0; flex: none; }
.start { width: 18px; display: flex; justify-content: center; }
.start svg { width: 7px; height: 7px; }
.t-search { width: 18px; display: flex; justify-content: center; }
.t-search svg { width: 8px; height: 8px; }
.apps { display: flex; height: 100%; margin-left: 1px; }
.app-i { width: 18.350px; height: 100%; display: flex; align-items: center; justify-content: center; position: relative; }
.app-i svg { width: 8px; height: 8px; }
.app-i.on::after { content: ""; position: absolute; left: 3px; right: 3px; bottom: 0; height: 1px; background: #7fb7dd; }
.app-i.current { background: #43596c; }
.xm { font: bold 5px "Liberation Sans", sans-serif; fill: #fff; text-anchor: middle; }
.ps { font: bold 5.500px "Liberation Sans", sans-serif; fill: #9cc4ff; text-anchor: middle; }
.tray { display: flex; align-items: center; height: 100%; font-size: 4.600px; padding-right: 8px; }
.weather svg { width: 10px; height: 8px; margin-right: 5px; }
.tr-text { margin-right: 3px; white-space: nowrap; }
.tr-icon { margin: 0 3px 0 6px; font-size: 5px; }
.tr-box { width: 9px; display: flex; justify-content: center; }
.tr-box svg { width: 5px; height: 5px; }
.tr-lang { margin: 0 2px 0 2px; font-size: 4.200px; }
.clock { width: 22px; text-align: center; line-height: 6px; font-size: 4.300px; margin-right: 7px; }
.notif svg { width: 7px; height: 7px; }

/* dialog */
.dialog { position: absolute; left: 331px; top: 204px; width: 267px; height: 151px; background: #f0f0f0; border: 1px solid #8a8a8a; display: flex; flex-direction: column; box-shadow: 0 0 2px rgba(0,0,0,.35); }
.dlg-title { height: 11px; background: #fff; display: flex; align-items: center; padding: 0 5px 0 4px; font-size: 4.800px; color: #222; flex: none; }
.dw { width: 17px; text-align: center; font-size: 5px; color: #333; }
.dw.dim { color: #bbb; }
.dlg-tabs { height: 9px; display: flex; align-items: flex-end; padding-left: 5px; font-size: 4.400px; flex: none; }
.dtab { padding: 0 2px 1px; height: 6px; display: flex; align-items: center; color: #555; margin-right: 1px; }
.dtab.on { height: 7.500px; padding: 0 3px; background: #fff; border: 1px solid #d4d4d4; border-bottom: 0; color: #222; }
.dlg-body { flex: 1; display: flex; padding: 3px 0 0 6px; gap: 3px; min-height: 0; }
.dlg-table { width: 210px; height: 107px; background: #fff; border: 1px solid #a4a4a4; padding-top: 1.500px; font-size: 4.200px; color: #333; flex: none; }
.dr { height: 7.560px; display: grid; grid-template-columns: 105px 1fr; align-items: center; }
.dr:nth-child(even) { background: #fff; }
.dr:nth-child(odd) { background: #ebebeb; }
.dr.dhead { background: #fff; }
.dr.sel { background: #fff; }
.dr.sel .dn { background: #e3f0fb; height: 100%; }
.dn { display: flex; align-items: center; padding-left: 3px; white-space: pre; }
.dv { display: flex; align-items: center; padding-left: 2px; white-space: pre; height: 100%; }
.dv.edit { border: 1px solid #777; background: #fff; }
.dhead .dn { padding-left: 3px; }
.vi { width: 4.500px; height: 4.500px; flex: none; margin-right: 1.500px; }
.vnum { width: 6px; flex: none; color: #555; font-size: 3.200px; }
.sw { width: 4px; height: 4px; margin-right: 1px; }
.s1 { background: #48d1cc; } .s2 { background: #ff00ff; } .s3 { background: #4169e1; } .s4 { background: #ffa07a; }
.dlg-side { flex: 1; display: flex; flex-direction: column; justify-content: flex-end; gap: 4px; padding: 0 7px 3px 0; }
.btn { height: 7.500px; background: #e1e1e1; border: 1px solid #bcbcbc; display: flex; align-items: center; justify-content: center; color: #333; font-size: 4.300px; }
.dlg-foot { height: 16px; flex: none; display: flex; justify-content: flex-end; align-items: flex-start; padding: 5px 5px 0 0; gap: 4px; }
.btn.wd { width: 26px; }
.btn.def { border: 1px solid #2a80c8; }
```
